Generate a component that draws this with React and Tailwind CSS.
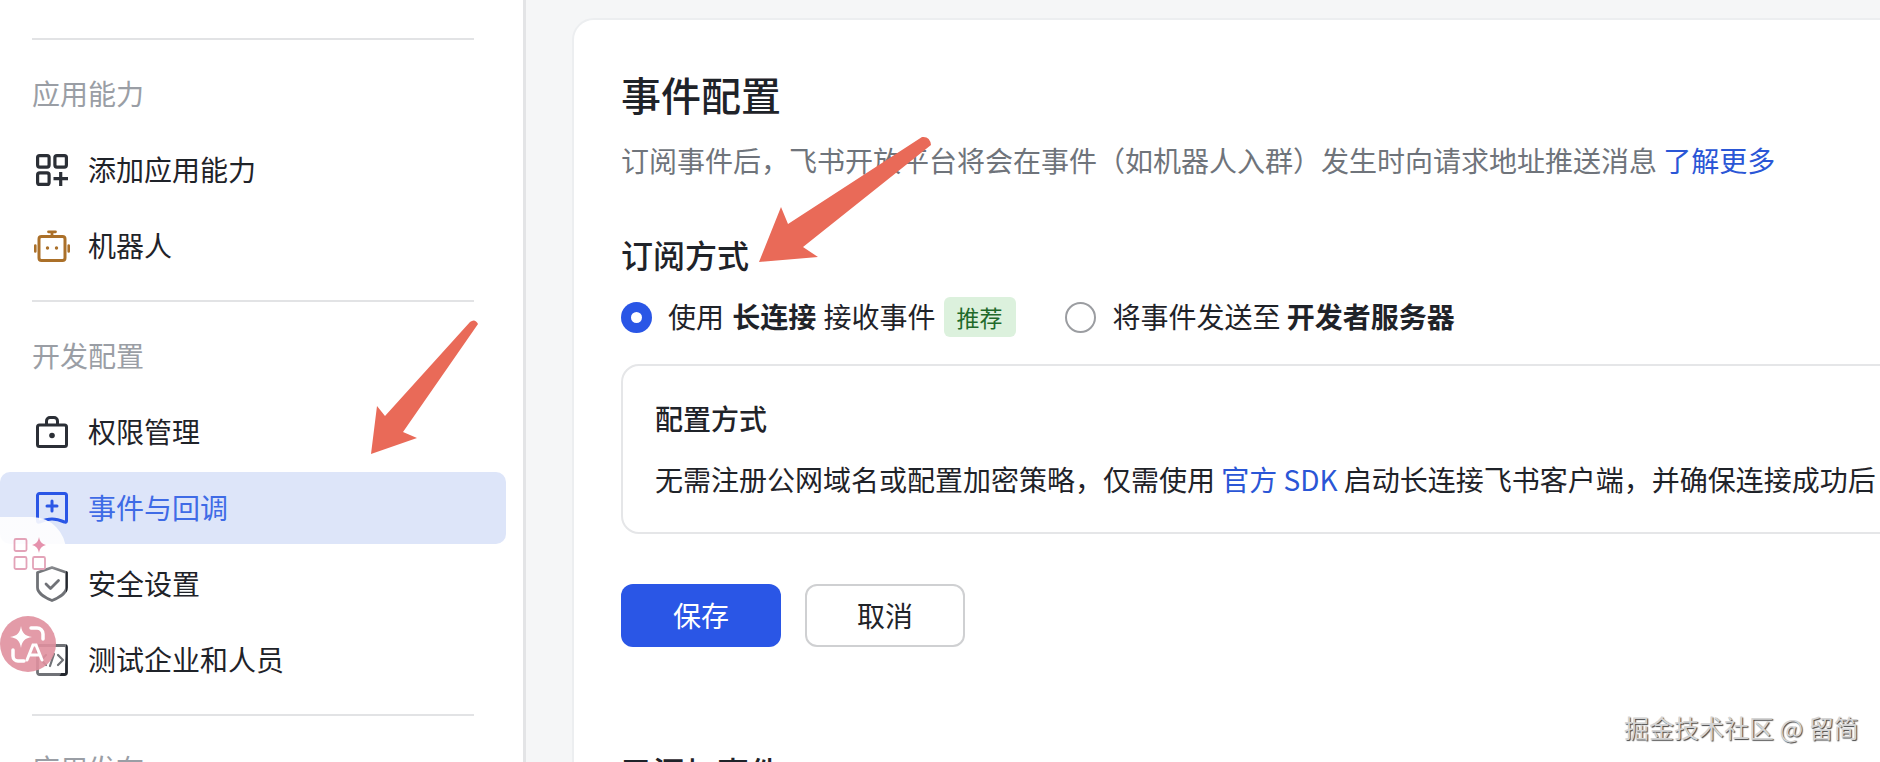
const font = { fontFamily: '"Noto Sans CJK SC", sans-serif' }

const IconAdd = () => (
  <svg width="32" height="32" viewBox="0 0 32 32" fill="none" stroke="#2b2f36" strokeWidth="3.200" strokeLinejoin="round">
    <rect x="1.600" y="1.600" width="11.500" height="11.500" rx="2" />
    <rect x="18.900" y="1.600" width="11.500" height="11.500" rx="2" />
    <rect x="1.600" y="18.900" width="11.500" height="11.500" rx="2" />
    <path d="M24.700 18v14M17.500 24.700h14.500" />
  </svg>
)

const IconRobot = () => (
  <svg width="36" height="32" viewBox="0 0 36 32" fill="none">
    <rect x="5" y="6.500" width="26" height="24" rx="2.500" stroke="#ab7029" strokeWidth="3" />
    <path d="M18 6V2.500M14.500 1.800h7" stroke="#ab7029" strokeWidth="2.800" strokeLinecap="round" />
    <path d="M1.300 15.500v6M34.700 15.500v6" stroke="#ab7029" strokeWidth="2.600" strokeLinecap="round" />
    <circle cx="13.500" cy="18" r="1.700" fill="#ab7029" />
    <circle cx="22.500" cy="18" r="1.700" fill="#ab7029" />
  </svg>
)

const IconBag = () => (
  <svg width="32" height="32" viewBox="0 0 32 32" fill="none" stroke="#2b2f36" strokeWidth="3" strokeLinejoin="round">
    <rect x="1.500" y="9" width="29" height="21.500" rx="2" />
    <path d="M10.500 9V5a3.500 3.500 0 0 1 3.500-3.500h4a3.500 3.500 0 0 1 3.500 3.500v4" />
    <circle cx="16" cy="19.500" r="2.800" fill="#2b2f36" stroke="none" />
  </svg>
)

const IconEvent = () => (
  <svg width="32" height="32" viewBox="0 0 32 32" fill="none" stroke="#2a56e6" strokeWidth="3" strokeLinejoin="round">
    <path d="M3.500 1.500h25a2 2 0 0 1 2 2v25.500c0 1-1 1.500-2 1c-4-1.700-8-3-12.500-3s-8.500 1.300-12.500 3c-1 .5-2 0-2-1v-25.500a2 2 0 0 1 2-2z" />
    <path d="M16 9v10M11 14h10" strokeLinecap="round" />
  </svg>
)

const IconShield = () => (
  <svg width="32" height="36" viewBox="0 0 32 36" fill="none" stroke="#23272e" strokeWidth="2.800" strokeLinejoin="round" strokeLinecap="round">
    <path d="M16 1.500l14.500 5v15c0 5-7 10-14.500 13c-7.500-3-14.500-8-14.500-13v-15z" />
    <path d="M10 18l4.500 4.500l8-8" />
  </svg>
)

const IconCode = () => (
  <svg width="32" height="32" viewBox="0 0 32 32" fill="none" stroke="#23272e" strokeWidth="2.800" strokeLinejoin="round" strokeLinecap="round">
    <rect x="1.500" y="1.500" width="29" height="29" rx="2" />
    <path d="M10 11l-5 5l5 5M22 11l5 5l-5 5M18 10l-4 12" strokeWidth="2.200" />
  </svg>
)

const Divider = ({ className }) => <div className={`mx-[32px] h-[2px] w-[442px] bg-[#e2e3e5] ${className}`} />

const Label = ({ children, className }) => (
  <div className={`pl-[32px] h-[40px] leading-[36px] text-[28px] text-[#9a9ea5] ${className}`}>{children}</div>
)

const Item = ({ icon, children, active }) => (
  <div className="h-[76px] py-[2px]">
    <div
      className={`h-[72px] w-[506px] pl-[36px] flex items-center rounded-[10px] text-[28px] ${
        active ? 'bg-[#dde5f9] text-[#3f6be6]' : 'text-[#1f2329]'
      }`}
    >
      <span className="w-[52px] shrink-0 flex items-center">{icon}</span>
      <span className="pb-[2px]">{children}</span>
    </div>
  </div>
)

// herramientas flotantes de la extension, encima del menu
const FloatingTools = () => (
  <div className="absolute left-0 top-[517px] w-[66px] h-[173px] rounded-r-[34px] bg-[linear-gradient(to_bottom,rgba(255,255,255,0.9)_18%,rgba(255,255,255,0.35)_32%,rgba(255,255,255,0.35)_100%)]">
    <svg className="absolute left-[13px] top-[20px]" width="36" height="36" viewBox="0 0 36 36" fill="none" stroke="#e3a3b8" strokeWidth="1.800">
      <rect x="1.500" y="2" width="12" height="12" rx="1.500" />
      <rect x="1.500" y="20" width="12" height="12" rx="1.500" />
      <rect x="20" y="20" width="12" height="12" rx="1.500" />
      <path d="M26 0c1 5 3 7 7 8c-4 1-6 3-7 8c-1-5-3-7-7-8c4-1 6-3 7-8z" fill="#e592ad" stroke="none" />
    </svg>
    <div className="absolute left-0 top-[99px] w-[56px] h-[56px] rounded-full bg-[#e0909f]/90 flex items-center justify-center">
      <svg width="44" height="44" viewBox="0 0 44 44" fill="none">
        <path d="M15 4c1 7 4 10 11 11c-7 1-10 4-11 11c-1-7-4-10-11-11c7-1 10-4 11-11z" fill="white" />
        <path d="M25 6h6a6 6 0 0 1 6 6v5M7 28v6a5 5 0 0 0 5 5h6" stroke="white" strokeWidth="3.500" strokeLinecap="round" />
        <path d="M21 38l6-15h3l6 15M24 33h9" stroke="white" strokeWidth="3" strokeLinecap="round" />
      </svg>
    </div>
  </div>
)

const Radio = ({ checked }) =>
  checked ? (
    <span className="w-[31px] h-[31px] rounded-full bg-[#2a56e6] flex items-center justify-center shrink-0">
      <span className="w-[11px] h-[11px] rounded-full bg-white" />
    </span>
  ) : (
    <span className="block w-[31px] h-[31px] rounded-full border-2 border-[#9b9da1] bg-white shrink-0" />
  )

export default function App() {
  return (
    <div className="relative flex h-[762px] w-full overflow-hidden bg-[#f5f6f7]" style={font}>
      <aside className="w-[526px] shrink-0 h-full bg-white border-r-[3px] border-[#e3e4e6] pt-[38px]">
        <Divider />
        <Label className="mt-[35px] mb-[17px]">应用能力</Label>
        <Item icon={<IconAdd />}>添加应用能力</Item>
        <Item icon={<span className="-ml-[2px]"><IconRobot /></span>}>机器人</Item>
        <Divider className="mt-[16px]" />
        <Label className="mt-[35px] mb-[17px]">开发配置</Label>
        <Item icon={<IconBag />}>权限管理</Item>
        <Item icon={<IconEvent />} active>事件与回调</Item>
        <Item icon={<IconShield />}>安全设置</Item>
        <Item icon={<IconCode />}>测试企业和人员</Item>
        <Divider className="mt-[16px]" />
        <Label className="mt-[34px]">应用发布</Label>
      </aside>

      <main className="flex-1 pl-[46px] pt-[18px] overflow-hidden">
        <div className="w-[1400px] h-[900px] bg-white border-2 border-[#eceef0] rounded-[22px] pl-[47px] pt-[48px]">
          <h1 className="h-[56px] leading-[52px] text-[40px] font-medium text-[#1f2329]">事件配置</h1>
          <p className="mt-[18px] h-[40px] leading-[36px] text-[28px] text-[#6f747b] whitespace-nowrap">
            订阅事件后，飞书开放平台将会在事件（如机器人入群）发生时向请求地址推送消息 <span className="text-[#2a56d6]">了解更多</span>
          </p>
          <h2 className="mt-[53px] h-[44px] leading-[38px] text-[32px] font-medium text-[#1f2329]">订阅方式</h2>
          <div className="mt-[18px] h-[40px] flex items-center text-[28px] text-[#1f2329] whitespace-nowrap">
            <Radio checked />
            <span className="ml-[16px] pb-[2px]">使用 <b className="font-bold ml-[2px] mr-[1px]">长连接</b> 接收事件</span>
            <span className="ml-[8px] h-[40px] w-[72px] rounded-[6px] bg-[#dcf1dd] text-[#1f6a2a] text-[23px] flex items-center justify-center">推荐</span>
            <span className="ml-[49px]"><Radio /></span>
            <span className="ml-[17px] pb-[2px]">将事件发送至 <b className="font-bold">开发者服务器</b></span>
          </div>
          <div className="mt-[27px] h-[170px] border-2 border-[#e5e6e8] rounded-[18px] pl-[32px] pt-[33px]">
            <div className="h-[40px] leading-[38px] text-[28px] font-medium text-[#1f2329]">配置方式</div>
            <div className="mt-[20px] h-[40px] leading-[40px] text-[28px] text-[#1f2329] whitespace-nowrap">
              无需注册公网域名或配置加密策略，仅需使用 <span className="text-[#2a56d6]">官方 SDK</span> 启动长连接飞书客户端，并确保连接成功后
            </div>
          </div>
          <div className="mt-[50px] flex gap-[24px]">
            <button className="w-[160px] h-[63px] pb-[2px] rounded-[12px] bg-[#2a56e6] text-white text-[28px]">保存</button>
            <button className="w-[160px] h-[63px] pb-[2px] rounded-[12px] bg-white border-2 border-[#cfd0d2] text-[#1f2329] text-[28px]">取消</button>
          </div>
          <h2 className="mt-[100px] h-[48px] leading-[48px] text-[32px] font-medium text-[#1f2329]">已添加事件</h2>
        </div>
      </main>

      <FloatingTools />

      {/* flechas de anotacion sobre la captura */}
      <svg className="absolute left-0 top-0 pointer-events-none" width="1880" height="762" viewBox="0 0 1880 762">
        <path d="M371 454L377 406L385 416L470 322Q475 318 478 324L403 432L417 438Z" fill="#e96a58" />
        <path d="M759 262L781 207L788 224L922 137Q930 136 931 145L803 247L818 257Z" fill="#e96a58" />
      </svg>

      <div className="absolute left-[1624px] top-[708px] h-[38px] leading-[38px] text-[25px] text-[#d4d4d4] whitespace-nowrap [text-shadow:1px_1px_1px_#444444]">
        掘金技术社区 @ 留简
      </div>
    </div>
  )
}
